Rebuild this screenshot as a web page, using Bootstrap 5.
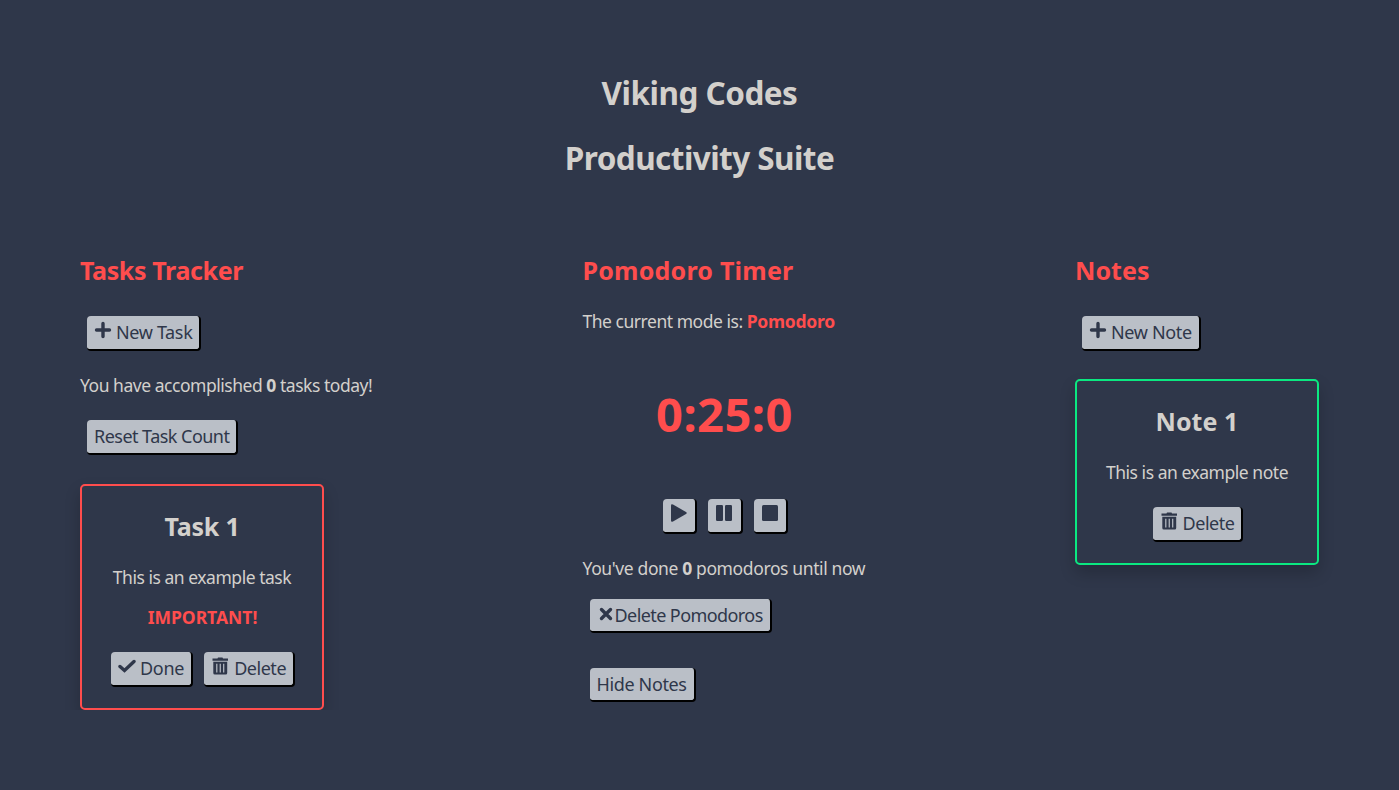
<!DOCTYPE html>
<html lang="en">
<head>
<meta charset="utf-8">
<meta name="viewport" content="width=device-width, initial-scale=1">
<title>Viking Codes Productivity Suite</title>
<link href="https://cdn.jsdelivr.net/npm/bootstrap@5.3.0/dist/css/bootstrap.min.css" rel="stylesheet">
<style>
body{background:#2f374a;color:#d3d0cc;font:17.5px/24px "Noto Sans","Open Sans",sans-serif;letter-spacing:-.47px;overflow:hidden}
p,h1,h2,h3{margin:0;white-space:nowrap}
.suite{padding:71px 80px 0}
h1{font-size:31.5px;line-height:43px;font-weight:700;letter-spacing:-.5px}
h1 + h1{margin-top:22px;letter-spacing:-.55px}
h2,h3{font-size:25px;line-height:34px;font-weight:700;letter-spacing:.08px}
.accent{color:#ff4d4d}
.tools{margin-top:74px}
.col-tasks{width:293px}
.col-timer{width:283px}
.col-notes{width:244px}
.col-tasks h2{letter-spacing:-.37px}
.col-timer h2{letter-spacing:.23px}
.col-tasks h3{letter-spacing:-.21px}
.action{display:inline-flex;align-items:center;height:35px;padding:0 7px;background:#babfc7;color:#2f374a;border:0 solid #000;border-width:0 2px 2px 0;border-radius:4px;font-size:18px;line-height:33px;letter-spacing:-.47px;white-space:nowrap}
.action svg{width:18px;height:18px;margin:-5px 4px 0 0;flex:none;fill:currentColor}
.action svg.line{fill:none;stroke:currentColor;stroke-width:3.4;stroke-linecap:round}
.action svg.bin{margin-right:5px}
.short{height:34px}
.short svg.cross{margin:-3px 0 0}
.tight{letter-spacing:-.27px}
.new-item{letter-spacing:-.35px}
.reset{letter-spacing:-.53px}
.clear{margin-top:19px;letter-spacing:-.58px}
.hide-notes{margin-top:35px;letter-spacing:-.36px}
.item{height:226px;border:2px solid #ff4d4d;border-radius:5px;padding-top:23px;width:244px;text-align:center;box-shadow:0 8px 16px rgba(0,0,0,.2)}
.item.note{height:186px;margin-top:28px;border-color:#0be881}
.item-actions{margin-top:23px;gap:11px;padding-left:2px}
.flag{letter-spacing:0;padding-left:1px}
.gap-a{margin-top:22px}.gap-b{margin-top:23px}.gap-c{margin-top:29px}
.indent{margin-left:7px}
.done-count{letter-spacing:-.38px}
.clock{font-size:47px;line-height:64px;font-weight:700;letter-spacing:.5px;margin-top:49px;padding-left:1px}
.media{margin-top:53px;gap:10.8px;padding-left:3px}
.media .action{width:34.7px}
.media svg{margin-right:0}
</style>
</head>
<body>
<main class="suite">
<header class="text-center">
<h1>Viking Codes</h1>
<h1>Productivity Suite</h1>
</header>
<div class="tools d-flex justify-content-between align-items-start">
<section class="col-tasks d-flex flex-column align-items-start">
<h2 class="accent">Tasks Tracker</h2>
<button class="action new-item indent gap-c"><svg class="line" viewBox="0 0 18 18"><path d="M9 2.500V15.500M2.500 9H15.500"/></svg>New Task</button>
<p class="gap-a">You have accomplished <b>0</b> tasks today!</p>
<button class="action reset indent gap-b">Reset Task Count</button>
<article class="item gap-c">
<h3>Task 1</h3>
<p class="gap-a">This is an example task</p>
<p class="accent flag fw-bold mt-3">IMPORTANT!</p>
<div class="item-actions d-flex justify-content-center">
<button class="action tight"><svg class="line" viewBox="0 0 18 18"><path d="M2 9.500 6.500 13.500 16 4.500"/></svg>Done</button>
<button class="action"><svg class="bin" viewBox="0 0 18 18"><path fill-rule="evenodd" d="M1.500 1.500H6.500L7 .5H11.500L12 1.500H17V3.700H1.500ZM2.300 4.700H16.200V16Q16.200 17.500 14.700 17.500H3.800Q2.300 17.500 2.300 16ZM5.200 6.700V15.500H6.400V6.700ZM8.650 6.700V15.500H9.850V6.700ZM12.100 6.700V15.500H13.300V6.700Z"/></svg>Delete</button>
</div>
</article>
</section>
<section class="col-timer d-flex flex-column align-items-start">
<h2 class="accent">Pomodoro Timer</h2>
<p class="gap-a">The current mode is: <b class="accent tight">Pomodoro</b></p>
<div class="clock accent align-self-center">0:25:0</div>
<div class="media d-flex align-self-center">
<button class="action" aria-label="Start"><svg viewBox="0 0 18 18"><path d="M1 1.500Q1-.5 3 .5L16 8Q17.500 9 16 10L3 17.500Q1 18.500 1 16.500Z"/></svg></button>
<button class="action" aria-label="Pause"><svg viewBox="0 0 18 18"><rect x="1" y="1" width="7" height="16" rx="1.200"/><rect x="10" y="1" width="7" height="16" rx="1.200"/></svg></button>
<button class="action" aria-label="Stop"><svg viewBox="0 0 18 18"><rect x="1" y="1" width="16" height="16" rx="1.500"/></svg></button>
</div>
<p class="gap-a done-count">You've done <b>0</b> pomodoros until now</p>
<button class="action short clear indent"><svg class="line cross" viewBox="0 0 18 18"><path d="M4.500 4.500 13.500 13.500M13.500 4.500 4.500 13.500"/></svg>Delete Pomodoros</button>
<button class="action short hide-notes indent">Hide Notes</button>
</section>
<section class="col-notes d-flex flex-column align-items-start">
<h2 class="accent">Notes</h2>
<button class="action new-item indent gap-c"><svg class="line" viewBox="0 0 18 18"><path d="M9 2.500V15.500M2.500 9H15.500"/></svg>New Note</button>
<article class="item note">
<h3>Note 1</h3>
<p class="gap-a">This is an example note</p>
<div class="item-actions d-flex justify-content-center">
<button class="action"><svg class="bin" viewBox="0 0 18 18"><path fill-rule="evenodd" d="M1.500 1.500H6.500L7 .5H11.500L12 1.500H17V3.700H1.500ZM2.300 4.700H16.200V16Q16.200 17.500 14.700 17.500H3.800Q2.300 17.500 2.300 16ZM5.200 6.700V15.500H6.400V6.700ZM8.650 6.700V15.500H9.850V6.700ZM12.100 6.700V15.500H13.300V6.700Z"/></svg>Delete</button>
</div>
</article>
</section>
</div>
</main>
<script src="https://cdn.jsdelivr.net/npm/bootstrap@5.3.0/dist/js/bootstrap.bundle.min.js"></script>
</body>
</html>
